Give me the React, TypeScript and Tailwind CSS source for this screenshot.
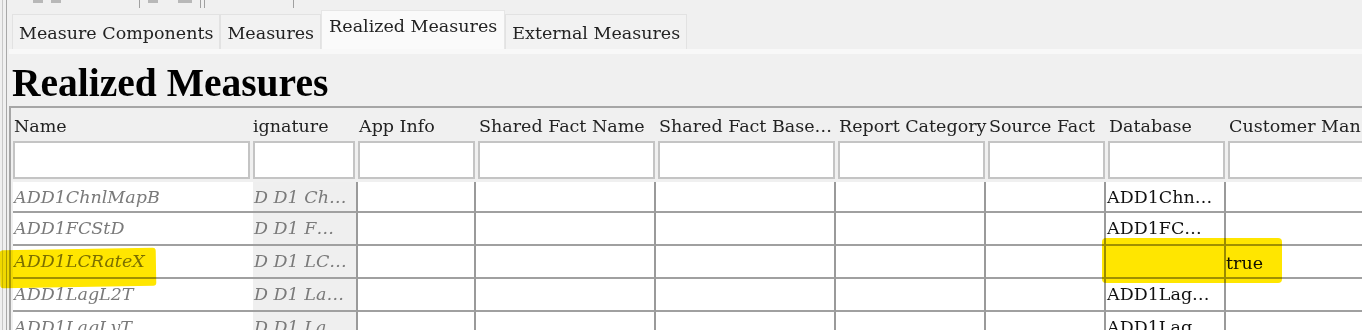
import React from "react"

const cols = [
  { h: "Name", w: 240 },
  { h: "Signature", w: 105, clip: true },
  { h: "App Info", w: 120 },
  { h: "Shared Fact Name", w: 180 },
  { h: "Shared Fact Base…", w: 180 },
  { h: "Report Category", w: 150 },
  { h: "Source Fact", w: 120 },
  { h: "Database", w: 120 },
  { h: "Customer Man", w: 150 },
]

const rows = [
  { name: "ADD1ChnlMapB", sig: "D D1 Ch…", db: "ADD1Chn…", cust: "" },
  { name: "ADD1FCStD", sig: "D D1 F…", db: "ADD1FC…", cust: "" },
  { name: "ADD1LCRateX", sig: "D D1 LC…", db: "", cust: "true" },
  { name: "ADD1LagL2T", sig: "D D1 La…", db: "ADD1Lag…", cust: "" },
  { name: "ADD1LagLyT", sig: "D D1 La…", db: "ADD1Lag…", cust: "" },
]

const tabs = ["Measure Components", "Measures", "Realized Measures", "External Measures"]

export default function App() {
  return (
    <div
      className="relative w-[1362px] h-[330px] overflow-hidden bg-[#f0f0f0] text-[#222] flex"
      style={{ fontFamily: '"DejaVu Serif", serif' }}
    >
      {/* window edge */}
      <div className="w-[5px] shrink-0 border-l border-l-[#c8c8c8] border-r border-r-[#a8a8a8] ml-[2px]" />

      <div className="flex-1 flex flex-col min-w-0 pl-[2px]">
        {/* toolbar remains */}
        <div className="h-[9px] shrink-0 flex items-start gap-[8px] pl-[24px]">
          <div className="w-[10px] h-[3px] bg-[#b8b8b8]" />
          <div className="w-[10px] h-[3px] bg-[#b8b8b8]" />
          <div className="w-px h-[8px] bg-[#a0a0a0] ml-[70px]" />
          <div className="w-[10px] h-[3px] bg-[#b8b8b8]" />
          <div className="w-[14px] h-[3px] bg-[#b8b8b8] ml-[12px]" />
          <div className="w-px h-[8px] bg-[#a0a0a0]" />
          <div className="w-px h-[8px] bg-[#a0a0a0] -ml-[5px]" />
          <div className="w-px h-[8px] bg-[#a0a0a0] ml-[80px]" />
        </div>

        {/* tabs */}
        <div className="h-[45px] shrink-0 flex items-end pl-[3px] border-b-[5px] border-b-[#f8f8f8]">
          {tabs.map((t, i) =>
            i === 2 ? (
              <div
                key={t}
                className="h-[39px] px-[7px] bg-[#fafafa] border border-[#e6e6e6] border-b-0 text-[17.5px] leading-[30px] whitespace-nowrap"
              >
                {t}
              </div>
            ) : (
              <div
                key={t}
                className="h-[35px] px-[6px] bg-[#f2f2f2] border border-[#e2e2e2] border-b-0 text-[17.5px] leading-[36px] whitespace-nowrap"
              >
                {t}
              </div>
            )
          )}
        </div>

        {/* heading */}
        <div className="h-[52px] shrink-0 pl-[3px] pt-[10px]">
          <h1
            className="text-[39.5px] font-bold leading-[38px] text-black whitespace-nowrap"
            style={{ fontFamily: '"Liberation Serif", serif' }}
          >
            Realized Measures
          </h1>
        </div>

        {/* table */}
        <div className="flex-1 border-t-2 border-t-[#a6a6a6] border-l-2 border-l-[#a6a6a6] pl-[2px]">
          {/* header row */}
          <div className="flex h-[32px] items-end">
            {cols.map((c) => (
              <div
                key={c.h}
                className="shrink-0 overflow-hidden whitespace-nowrap text-[17.5px] leading-[26px] pb-[1px]"
                style={{ width: c.w }}
              >
                {c.clip ? (
                  <span className="block -ml-[12px]">{c.h}</span>
                ) : (
                  <span className="block pl-[1px]">{c.h}</span>
                )}
              </div>
            ))}
          </div>

          {/* filter row */}
          <div className="flex h-[41px] pt-[1px]">
            {cols.map((c) => (
              <div key={c.h} className="shrink-0 pr-[3px]" style={{ width: c.w }}>
                <div className="h-[38px] bg-white border-2 border-[#c4c4c4]" />
              </div>
            ))}
          </div>

          {/* data rows */}
          {rows.map((r, i) => (
            <div key={i} className={`flex ${i === 0 ? "h-[31px] mt-[1px]" : "h-[33px]"} text-[17.5px]`}>
              <div className="w-[240px] shrink-0 bg-white border-b-2 border-b-[#a0a0a0] pl-[1px] italic text-[#7a7a7a] leading-[30px] whitespace-nowrap overflow-hidden">
                {r.name}
              </div>
              <div className="w-[105px] shrink-0 bg-[#efefef] border-b-2 border-b-[#a0a0a0] border-r-2 border-r-[#9a9a9a] pl-[1px] italic text-[#7a7a7a] leading-[30px] whitespace-nowrap overflow-hidden">
                {r.sig}
              </div>
              {[118, 180, 180, 150, 120].map((w, j) => (
                <div
                  key={j}
                  className="shrink-0 bg-white border-b-2 border-b-[#a0a0a0] border-r-2 border-r-[#9a9a9a]"
                  style={{ width: w }}
                />
              ))}
              <div className="w-[120px] shrink-0 bg-white border-b-2 border-b-[#a0a0a0] border-r-2 border-r-[#9a9a9a] pl-[1px] text-[#111] leading-[30px] whitespace-nowrap overflow-hidden">
                {r.db}
              </div>
              <div className="w-[150px] shrink-0 bg-white border-b-2 border-b-[#a0a0a0] text-[#111] leading-[34px] whitespace-nowrap overflow-hidden">
                {r.cust}
              </div>
            </div>
          ))}
        </div>
      </div>

      {/* highlighter marks */}
      <div className="absolute left-0 top-[249px] w-[156px] h-[38px] bg-[#ffe600] mix-blend-multiply rounded-[3px] -rotate-1" />
      <div className="absolute left-[1102px] top-[238px] w-[180px] h-[45px] bg-[#ffe600] mix-blend-multiply rounded-[4px]" />
    </div>
  )
}
